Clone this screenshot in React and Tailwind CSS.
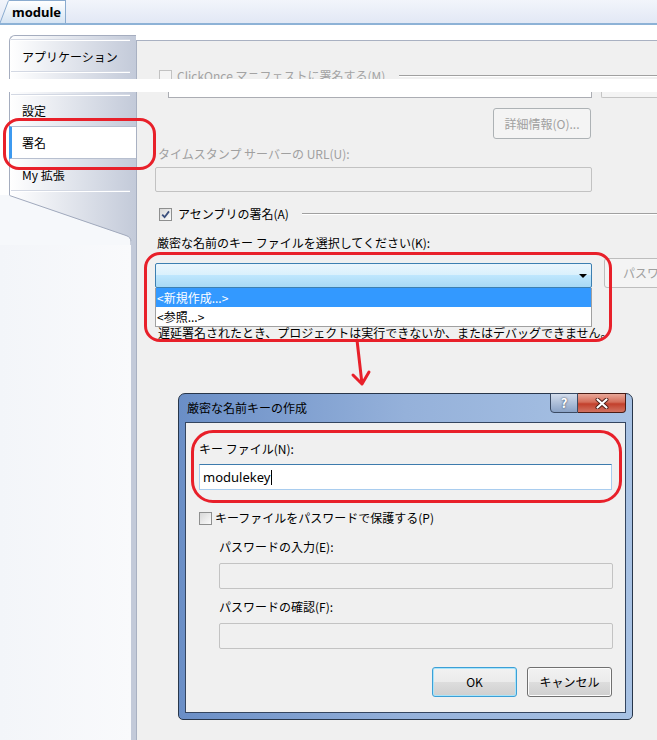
import React from "react";

function Checkbox({ checked = false, disabled = false }) {
  return (
    <div
      className={
        disabled
          ? "flex h-[13px] w-[13px] shrink-0 items-center justify-center border border-[#c2c2c2] bg-[#f4f4f4]"
          : "flex h-[13px] w-[13px] shrink-0 items-center justify-center border border-[#8e8f8f] bg-linear-to-br from-[#d8d8d8] to-[#fbfbfb]"
      }
    >
      {checked && (
        <svg width="11" height="11" viewBox="0 0 11 11">
          <path d="M2.2 5.6 L4.6 8.2 L9 2.4" fill="none" stroke="#3b4f7d" strokeWidth="1.8" />
        </svg>
      )}
    </div>
  );
}

function Line() {
  return <div className="ml-px mr-[6px] h-px bg-white shadow-[0_-1px_0_#d3d8e3]" />;
}

function Win7Button({ children, focused = false }) {
  return (
    <div
      className={
        focused
          ? "flex h-[30px] w-[85px] items-center justify-center rounded-[3px] border border-[#3c9fd6] bg-[linear-gradient(to_bottom,#f2f2f2_0%,#ebebeb_50%,#dddddd_50%,#cfcfcf_100%)] shadow-[inset_0_0_0_1px_#a8e4fa]"
          : "flex h-[30px] w-[85px] items-center justify-center rounded-[3px] border border-[#707070] bg-[linear-gradient(to_bottom,#f2f2f2_0%,#ebebeb_50%,#dddddd_50%,#cfcfcf_100%)] shadow-[inset_0_0_0_1px_#fcfcfc]"
      }
    >
      {children}
    </div>
  );
}

function TabBar() {
  return (
    <div className="flex h-[25px] items-end border-b-2 border-[#8db2d6] bg-linear-to-b from-[#f2f5fb] to-[#e2e8f5]">
      <div className="flex h-[23px] items-stretch">
        <svg width="9" height="23" className="block">
          <defs>
            <linearGradient id="tabg" x1="0" y1="0" x2="0" y2="1">
              <stop offset="0" stopColor="#ffffff" />
              <stop offset="1" stopColor="#d6e4f3" />
            </linearGradient>
          </defs>
          <polygon points="0,23 8,0.5 9,0.5 9,23" fill="url(#tabg)" />
          <line x1="0" y1="23" x2="8.5" y2="0.5" stroke="#8aabcf" />
        </svg>
        <div className="flex items-center border-t border-r border-[#8aabcf] bg-linear-to-b from-white to-[#d6e4f3] pl-[3px] pr-[4px] font-['Noto_Sans',sans-serif] text-[13px] font-bold">
          module
        </div>
      </div>
    </div>
  );
}

function Sidebar() {
  return (
    <div className="flex w-[136px] shrink-0 flex-col">
      <div className="ml-[9px] h-[160px] rounded-tl-[6px] border-l border-t border-[#a5adbf] bg-linear-to-r from-white to-[#c3cad9] pt-[4px]">
        <Line />
        <div className="flex h-[31px] items-center pl-[12px]">アプリケーション</div>
        <Line />
        <div className="h-[22px]" />
        <Line />
        <div className="flex h-[30px] items-center pl-[12px]">設定</div>
        <div className="-ml-px flex h-[33px] w-[127px] items-center border-y border-l-[3px] border-y-[#b7bfcf] border-l-[#3d9af0] bg-white pl-[10px]">
          署名
        </div>
        <div className="flex h-[32px] items-center pl-[12px]">My 拡張</div>
        <Line />
      </div>
      <svg width="136" height="50" className="block">
        <defs>
          <linearGradient id="sg" gradientUnits="userSpaceOnUse" x1="9" y1="0" x2="136" y2="0">
            <stop offset="0" stopColor="#ffffff" />
            <stop offset="1" stopColor="#c3cad9" />
          </linearGradient>
        </defs>
        <rect width="136" height="50" fill="#f6f8fb" />
        <path d="M9.5,0 L136,0 L136,50 L131,50 L131,47 Q131,42 126,40.5 L9.5,1 Z" fill="url(#sg)" />
        <path d="M9.5,0.5 L126,40.5 Q131,42 131,47 L131,50" fill="none" stroke="#a0a9bc" />
        <rect x="131" y="46" width="5" height="4" fill="#c3cad9" />
      </svg>
      <div className="flex-1 border-r-[5px] border-[#c3cad9] bg-linear-to-r from-[#f3f5f9] to-[#f9fafc]" />
    </div>
  );
}

function Dialog() {
  return (
    <div className="ml-[41px] mt-[52px] flex h-[327px] w-[455px] flex-col rounded-t-[7px] rounded-b-[5px] border border-[#28364a] bg-linear-to-r from-[#6a8ec6] via-[#95b1da] to-[#a8c2e4] px-[6px] pb-[6px]">
      <div className="flex h-[28px] items-start">
        <div className="pl-[2px] pt-[6px]">厳密な名前キーの作成</div>
        <div className="-mt-px ml-auto flex">
          <div className="flex h-[20px] w-[28px] items-center justify-center rounded-bl-[4px] border border-[#3a4a63] bg-linear-to-b from-[#d3ddec] to-[#8aa2c6] text-[13px] font-bold text-white [text-shadow:0_0_2px_#1d2b40]">
            ?
          </div>
          <div className="flex h-[20px] w-[48px] items-center justify-center rounded-br-[4px] border border-l-0 border-[#4a1d16] bg-[linear-gradient(to_bottom,#e9a899_0%,#d46d59_45%,#c2402c_55%,#d27361_100%)]">
            <svg width="14" height="11" viewBox="0 0 14 11">
              <path d="M2.5 1.5 L11.5 9.5 M11.5 1.5 L2.5 9.5" stroke="#4a1d16" strokeWidth="4" strokeLinecap="round" />
              <path d="M2.5 1.5 L11.5 9.5 M11.5 1.5 L2.5 9.5" stroke="#ffffff" strokeWidth="2.2" strokeLinecap="round" />
            </svg>
          </div>
        </div>
      </div>
      <div className="flex flex-1 flex-col border border-[#34455f] bg-[#f0f0f0]">
        <div className="ml-[13px] mt-[18px] h-[16px]">キー ファイル(N):</div>
        <div className="ml-[13px] mt-[7px] flex h-[26px] w-[413px] items-center border border-[#a9cdef] border-t-[#3d7bad] bg-white pl-[3px] font-['Noto_Sans',sans-serif] text-[13px]">
          modulekey
          <span className="ml-px inline-block h-[15px] w-px bg-black" />
        </div>
        <div className="ml-[13px] mt-[20px] flex h-[16px] items-center">
          <Checkbox />
          <span className="ml-[3px]">キーファイルをパスワードで保護する(P)</span>
        </div>
        <div className="ml-[33px] mt-[13px] h-[16px]">パスワードの入力(E):</div>
        <div className="ml-[33px] mt-[8px] h-[26px] w-[394px] rounded-[2px] border border-[#c3c3c3] bg-[#f0f0f0]" />
        <div className="ml-[33px] mt-[10px] h-[16px]">パスワードの確認(F):</div>
        <div className="ml-[33px] mt-[8px] h-[26px] w-[394px] rounded-[2px] border border-[#c3c3c3] bg-[#f0f0f0]" />
        <div className="mt-[18px] flex justify-end gap-[10px] pr-[13px]">
          <Win7Button focused>OK</Win7Button>
          <Win7Button>キャンセル</Win7Button>
        </div>
      </div>
    </div>
  );
}

function Panel() {
  return (
    <div className="mt-[5px] flex min-w-0 flex-1 flex-col border-l border-t border-[#a9b1c2] bg-[#f0f0f0]">
      <div className="ml-[22px] mt-[27px] flex h-[16px] items-center">
        <Checkbox disabled />
        <span className="ml-[5px] whitespace-nowrap text-[#a3a3a3]">ClickOnce マニフェストに署名する(M)</span>
        <div className="ml-[14px] h-[2px] flex-1 border-t border-b border-t-[#a0a0a0] border-b-white" />
      </div>
      <div className="flex h-[14px]">
        <div className="ml-[31px] h-full w-[424px] border-x border-b border-[#abadb3] bg-white" />
        <div className="ml-[9px] h-full flex-1 rounded-bl-[2px] border-l border-b border-[#c4c4c4] bg-[#f4f4f4]" />
      </div>
      <div className="ml-[356px] mt-[10px] flex h-[31px] w-[98px] items-center justify-center rounded-[3px] border border-[#adb2b5] bg-[#f4f4f4] text-[#a0a0a0]">
        詳細情報(O)...
      </div>
      <div className="ml-[21px] mt-[7px] h-[16px] text-[#a0a0a0]">タイムスタンプ サーバーの URL(U):</div>
      <div className="ml-[18px] mt-[5px] h-[25px] w-[437px] rounded-[2px] border border-[#c2c2c2] bg-[#f0f0f0]" />
      <div className="ml-[22px] mt-[14px] flex h-[16px] items-center">
        <Checkbox checked />
        <span className="ml-[6px] whitespace-nowrap">アセンブリの署名(A)</span>
        <div className="ml-[13px] h-[2px] flex-1 border-t border-b border-t-[#a0a0a0] border-b-white" />
      </div>
      <div className="ml-[20px] mt-[13px] h-[16px] whitespace-nowrap">厳密な名前のキー ファイルを選択してください(K):</div>
      <div className="mt-[7px] flex h-[30px] items-end">
        <div className="ml-[18px] flex h-[25px] w-[437px] shrink-0 items-center justify-end rounded-[2px] border border-[#3c7fb1] bg-[linear-gradient(to_bottom,#eaf6fd_0%,#d9f0fc_50%,#bee6fd_50%,#a7d9f5_100%)] pr-[4px]">
          <svg width="8" height="4" viewBox="0 0 8 4">
            <polygon points="0,0 8,0 4,4" fill="#000" />
          </svg>
        </div>
        <div className="ml-[12px] flex h-[30px] w-[100px] shrink-0 items-center whitespace-nowrap rounded-[3px] border border-[#bdbdbd] bg-[#f4f4f4] pl-[18px] text-[#a0a0a0]">
          パスワード(P)...
        </div>
      </div>
      <div className="ml-[18px] w-[437px] border-x border-b border-[#a0a0a0] bg-white">
        <div className="flex h-[19px] items-center bg-[#3399ff] pl-px text-white">&lt;新規作成...&gt;</div>
        <div className="flex h-[19px] items-center pl-px">&lt;参照...&gt;</div>
      </div>
      <div className="ml-[21px] -mt-[2px] h-[16px] whitespace-nowrap">
        遅延署名されたとき、プロジェクトは実行できないか、またはデバッグできません。
      </div>
      <Dialog />
    </div>
  );
}

export default function App() {
  return (
    <div className="relative h-[740px] w-[657px] overflow-hidden bg-white font-['Noto_Sans_CJK_JP',sans-serif] text-[12px] leading-[16px] text-black">
      <TabBar />
      <div className="flex h-[715px] pt-[10px]">
        <Sidebar />
        <Panel />
      </div>
      {/* white strip across the stitched screenshot */}
      <div className="absolute left-0 right-0 top-[79px] h-[13px] bg-white" />
      {/* red annotations */}
      <div className="pointer-events-none absolute left-[3px] top-[118px] h-[52px] w-[153px] rounded-[16px] border-[3px] border-[#e8202a]" />
      <div className="pointer-events-none absolute left-[144px] top-[252px] h-[90px] w-[468px] rounded-[16px] border-[3px] border-[#e8202a]" />
      <svg className="pointer-events-none absolute left-[345px] top-[338px]" width="30" height="50" viewBox="0 0 30 50">
        <path d="M12 2 L17 46 M8 37 L17 46 L24 34" fill="none" stroke="#e8202a" strokeWidth="3" strokeLinecap="round" strokeLinejoin="round" />
      </svg>
      <div className="pointer-events-none absolute left-[191px] top-[430px] h-[73px] w-[431px] rounded-[22px] border-[3px] border-[#e8202a]" />
    </div>
  );
}
